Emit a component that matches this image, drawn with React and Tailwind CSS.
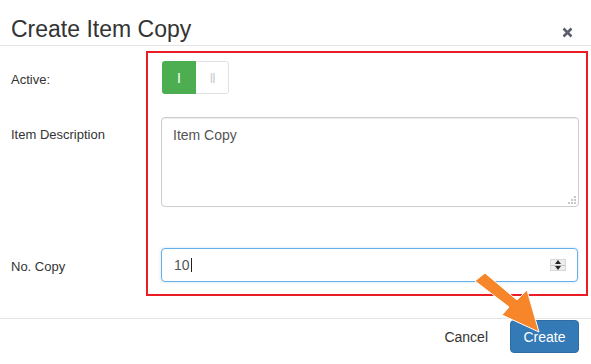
export default function App() {
  return (
    <div
      className="relative w-[591px] h-[364px] overflow-hidden bg-white text-[#333]"
      style={{ fontFamily: '"Liberation Sans", Arial, sans-serif' }}
    >
      {/* Header */}
      <div className="flex h-[46px] items-start justify-between border-b border-[#e5e5e5] pl-[11px] pr-[18px]">
        <h4 className="mt-[18px] text-[23px] leading-[23px] font-normal text-[#333]">Create Item Copy</h4>
        <button className="mt-[27px] flex h-[11px] w-[11px] items-center justify-center" aria-label="Close">
          <svg width="11" height="11" viewBox="0 0 11 11">
            <path d="M1.5 1.5 L9.5 9.5 M9.5 1.5 L1.5 9.5" stroke="#5a5f69" strokeWidth="2.6" strokeLinecap="butt" />
          </svg>
        </button>
      </div>

      {/* Body */}
      <div className="flex flex-col pl-[11px] pr-[12px] pt-[15px] pb-[36px] text-[13px]">
        {/* Active */}
        <div className="flex">
          <label className="w-[150px] pt-[11px] leading-[15px]">Active:</label>
          <div className="ml-[1px] flex h-[33px] w-[67px] overflow-hidden rounded-[3px]">
            <div className="flex w-[34px] items-center justify-center bg-[#4cae50] text-[14px] leading-[16px] text-white">I</div>
            <div className="flex flex-1 items-center justify-center rounded-r-[3px] border border-l-0 border-[#e2e2e2] bg-white text-[14px] leading-[16px] tracking-[-1.5px] text-[#cfcfcf]">
              II
            </div>
          </div>
        </div>

        {/* Item Description */}
        <div className="mt-[23px] flex">
          <label className="w-[150px] pt-[10px] leading-[15px]">Item Description</label>
          <div className="relative h-[90px] flex-1 rounded-[4px] border border-[#cccccc] bg-white px-[11px] pt-[7px] text-[14px] leading-[20px] text-[#555] shadow-[inset_0_1px_1px_rgba(0,0,0,0.075)]">
            Item Copy
            <svg className="absolute bottom-[2px] right-[2px]" width="8" height="8" viewBox="0 0 8 8">
              <rect x="6" y="0" width="2" height="2" fill="#c8c8c8" />
              <rect x="3" y="3" width="2" height="2" fill="#c8c8c8" />
              <rect x="6" y="3" width="2" height="2" fill="#c8c8c8" />
              <rect x="0" y="6" width="2" height="2" fill="#c8c8c8" />
              <rect x="3" y="6" width="2" height="2" fill="#c8c8c8" />
              <rect x="6" y="6" width="2" height="2" fill="#c8c8c8" />
            </svg>
          </div>
        </div>

        {/* No. Copy */}
        <div className="mt-[41px] flex">
          <label className="w-[150px] pt-[11px] leading-[15px]">No. Copy</label>
          <div className="mr-[1px] flex h-[34px] flex-1 items-center rounded-[4px] border border-[#66afe9] bg-white pl-[12px] pr-[11px] text-[14px] leading-[20px] text-[#555] shadow-[0_0_3px_rgba(102,175,233,0.35)]">
            <span className="flex items-center">
              10<span className="ml-[1px] inline-block h-[14px] w-[1px] bg-[#222]"></span>
            </span>
            <div className="ml-auto flex h-[12px] w-[16px] flex-col border border-[#d9d9d9] bg-[#ededed]">
              <div className="flex flex-1 items-center justify-center border-b border-[#c4c4c4]">
                <svg width="6" height="4" viewBox="0 0 6 4"><path d="M3 0 L6 4 L0 4 Z" fill="#222" /></svg>
              </div>
              <div className="flex flex-1 items-center justify-center">
                <svg width="6" height="4" viewBox="0 0 6 4"><path d="M0 0 L6 0 L3 4 Z" fill="#222" /></svg>
              </div>
            </div>
          </div>
        </div>
      </div>

      {/* Footer */}
      <div className="flex items-center justify-end border-t border-[#e5e5e5] pt-[1px] pr-[12px] text-[14px]">
        <button className="mr-[10px] h-[33px] px-[12px] leading-[20px] text-[#333]">Cancel</button>
        <button className="h-[33px] w-[69px] rounded-[4px] border border-[#2e6da4] bg-[#337ab7] leading-[20px] text-white">
          Create
        </button>
      </div>

      {/* Red annotation box */}
      <div className="pointer-events-none absolute left-[146px] top-[51px] h-[245px] w-[442px] border-2 border-[#ec1c24]"></div>

      {/* Orange arrow annotation */}
      <svg className="pointer-events-none absolute left-0 top-0" width="591" height="364" viewBox="0 0 591 364">
        <polygon
          points="485,273 517,300 527,290 539,332 502,315 509,307 475,281"
          fill="#f7862a"
          stroke="#ffffff"
          strokeWidth="1"
          strokeLinejoin="miter"
        />
      </svg>
    </div>
  );
}
